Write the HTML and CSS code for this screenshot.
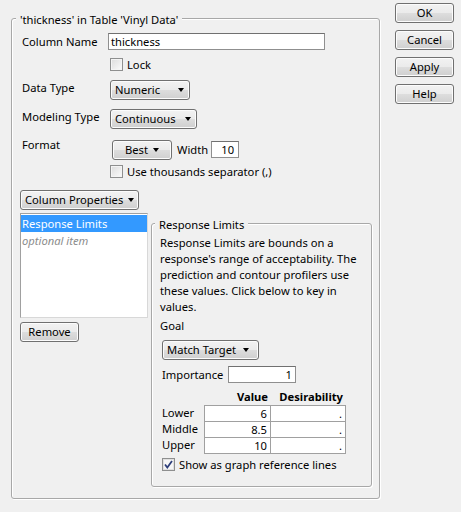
FILE: index.html
```html
<!DOCTYPE html>
<html>
<head>
<meta charset="utf-8">
<link rel="stylesheet" href="styles.css">
</head>
<body>
<div class="page">
  <div class="group main-group">
    <div class="group-title main-title"><span>'thickness' in Table 'Vinyl Data'</span></div>
    <div class="form">
      <div class="row row-name">
        <div class="label">Column Name</div>
        <div class="input name-input">thickness</div>
      </div>
      <div class="row row-lock">
        <div class="label"></div>
        <label class="check"><span class="box"></span><span>Lock</span></label>
      </div>
      <div class="row row-drop">
        <div class="label">Data Type</div>
        <div class="btn drop drop-numeric"><span>Numeric</span><i class="tri"></i></div>
      </div>
      <div class="row row-drop">
        <div class="label">Modeling Type</div>
        <div class="btn drop drop-cont"><span>Continuous</span><i class="tri"></i></div>
      </div>
      <div class="row row-format">
        <div class="label label-format">Format</div>
        <div class="format-ctrls">
          <div class="btn drop drop-best"><span>Best</span><i class="tri"></i></div>
          <span class="width-label">Width</span>
          <div class="input width-input">10</div>
        </div>
      </div>
      <div class="row row-sep">
        <div class="label"></div>
        <label class="check"><span class="box"></span><span>Use thousands separator (,)</span></label>
      </div>
    </div>
    <div class="btn drop drop-props"><span>Column Properties</span><i class="tri"></i></div>
    <div class="lower">
      <div class="left-col">
        <div class="listbox">
          <div class="item selected">Response Limits</div>
          <div class="item optional">optional item</div>
        </div>
        <div class="btn remove">Remove</div>
      </div>
      <div class="group inner-group">
        <div class="group-title inner-title"><span>Response Limits</span></div>
        <p class="desc">Response Limits are bounds on a response's range of acceptability. The prediction and contour profilers use these values. Click below to key in values.</p>
        <div class="goal">Goal</div>
        <div class="btn drop drop-match"><span>Match Target</span><i class="tri"></i></div>
        <div class="importance">
          <span class="imp-label">Importance</span>
          <div class="input imp-input">1</div>
        </div>
        <div class="limits">
          <div class="hcell"></div>
          <div class="hcell hval">Value</div>
          <div class="hcell hdes">Desirability</div>
          <div class="rowhead">Lower</div>
          <div class="cell">6</div>
          <div class="cell des">.</div>
          <div class="rowhead">Middle</div>
          <div class="cell">8.5</div>
          <div class="cell des">.</div>
          <div class="rowhead">Upper</div>
          <div class="cell">10</div>
          <div class="cell des">.</div>
        </div>
        <label class="check check-graph"><span class="box checked"><svg width="9" height="9" viewBox="0 0 9 9"><path d="M1 4.5 L3.3 7.5 L8 1" fill="none" stroke="#2e3f7a" stroke-width="1.8"/></svg></span><span>Show as graph reference lines</span></label>
      </div>
    </div>
  </div>
  <div class="side">
    <div class="btn side-btn">OK</div>
    <div class="btn side-btn">Cancel</div>
    <div class="btn side-btn">Apply</div>
    <div class="btn side-btn">Help</div>
  </div>
</div>
</body>
</html>
```

FILE: styles.css
```css
html, body {
  margin: 0;
  padding: 0;
  background: #f0f0f0;
}
body {
  font-family: "Noto Sans", "DejaVu Sans", sans-serif;
  font-size: 11.2px;
  color: #000;
  width: 461px;
  height: 512px;
  overflow: hidden;
}
.page {
  display: flex;
  align-items: flex-start;
}
.group {
  box-sizing: border-box;
  border: 1px solid #a8a8a8;
  border-radius: 3px;
  box-shadow: 1px 1px 0 #fff, inset 1px 1px 0 #fff;
}
.main-group {
  margin: 18px 0 0 11px;
  width: 369px;
  height: 481px;
  padding: 0 0 0 10px;
}
.group-title {
  height: 15px;
  line-height: 15px;
  margin-top: -7px;
}
.group-title span {
  display: inline-block;
  background: #f0f0f0;
  padding: 0 4px;
}
.main-title span { margin-left: -6px; }
.inner-title span { margin-left: -5px; }

.form {
  margin-top: 6px;
  display: flex;
  flex-direction: column;
}
.row {
  display: grid;
  grid-template-columns: 86px auto;
  align-items: start;
}
.label {
  line-height: 15px;
}
.row-name .label { line-height: 17px; }
.row-lock { margin-top: 8px; }
.row-drop { margin-top: 9px; }
.row-format { margin-top: 11px; }
.row-sep { margin-top: 5px; }
.label-format { margin-top: -3px; }

.input {
  box-sizing: border-box;
  background: #fff;
  border: 1px solid #8f8f8f;
  border-top-color: #707070;
  height: 17px;
  line-height: 15px;
  padding: 0 2px;
}
.name-input { width: 217px; }

.check {
  display: flex;
  align-items: center;
  gap: 4px;
  height: 13px;
  line-height: 13px;
  margin-left: 2px;
}
.box {
  box-sizing: border-box;
  width: 13px;
  height: 13px;
  border: 1px solid #8e8f8f;
  background: linear-gradient(135deg, #dcdcdc, #fbfbfb);
  box-shadow: inset 0 0 0 1px #f4f4f4;
  display: flex;
  align-items: center;
  justify-content: center;
}
.box.checked { background: #f6f6f6; box-shadow: inset 0 0 0 1px #e0e0e0; }

.btn {
  box-sizing: border-box;
  height: 20px;
  line-height: 18px;
  border: 1px solid #707070;
  border-radius: 3px;
  background: linear-gradient(#f2f2f2 0%, #ebebeb 48%, #dddddd 52%, #cfcfcf 100%);
  box-shadow: inset 0 0 0 1px #fcfcfc;
  text-align: center;
}
.drop {
  display: flex;
  align-items: center;
  justify-content: space-between;
  padding: 0 5px 0 4px;
  margin-left: 2px;
}
.tri {
  width: 0;
  height: 0;
  border-left: 3.5px solid transparent;
  border-right: 3.5px solid transparent;
  border-top: 4px solid #000;
}
.drop-numeric { width: 80px; }
.drop-cont { width: 87px; }

.format-ctrls {
  display: flex;
  align-items: flex-start;
}
.drop-best {
  width: 60px;
  margin-left: 4px;
  padding: 0 12px 0 12px;
}
.width-label {
  margin-left: 5px;
  line-height: 19px;
}
.width-input {
  margin-left: 3px;
  margin-top: 1px;
  width: 28px;
  text-align: right;
  padding-right: 4px;
}

.drop-props {
  margin: 12px 0 0 -2px;
  width: 119px;
  padding: 0 4px 0 4px;
}

.lower {
  display: flex;
  align-items: flex-start;
  gap: 3px;
  margin: 3px 0 0 -2px;
}
.left-col {
  display: flex;
  flex-direction: column;
  align-items: flex-start;
}
.listbox {
  box-sizing: border-box;
  width: 128px;
  height: 105px;
  background: #fff;
  border: 1px solid #a0a0a0;
  border-right-color: #d8d8d8;
  border-bottom-color: #d8d8d8;
  padding: 1px 0 0 0;
}
.item {
  height: 17px;
  line-height: 17px;
  padding-left: 1px;
}
.item.selected {
  background: #3399ff;
  color: #fff;
}
.item.optional {
  color: #8c8c8c;
  font-style: italic;
}
.remove {
  margin-top: 4px;
  width: 59px;
}

.inner-group {
  margin-top: 10px;
  width: 221px;
  height: 264px;
  padding: 0 0 0 8px;
}
.desc {
  margin: 3px 0 0 0;
  line-height: 16px;
  width: 205px;
}
.goal {
  margin-top: 3px;
  line-height: 16px;
}
.drop-match {
  margin-top: 6px;
  width: 97px;
  padding: 0 9px 0 4px;
}
.importance {
  margin: 6px 0 0 2px;
  display: flex;
  align-items: center;
}
.imp-label { width: 66px; }
.imp-input {
  width: 68px;
  text-align: right;
  padding-right: 3px;
}
.limits {
  margin: 6px 0 0 1px;
  display: grid;
  grid-template-columns: 43px 67px 75px;
}
.hcell {
  height: 16px;
  line-height: 16px;
  font-weight: bold;
  text-align: right;
  padding-right: 3px;
}
.rowhead {
  box-sizing: border-box;
  height: 17px;
  line-height: 16px;
  margin-top: -1px;
  padding-left: 1px;
}
.limits .rowhead:nth-child(4) { margin-top: 0; }
.cell {
  box-sizing: border-box;
  height: 17px;
  line-height: 15px;
  background: #fff;
  border: 1px solid #a0a0a0;
  text-align: right;
  padding-right: 3px;
  margin-top: -1px;
}
.limits .cell:nth-child(5), .limits .cell:nth-child(6) { margin-top: 0; }
.cell.des { margin-left: -1px; }
.check-graph {
  margin: 4px 0 0 2px;
}

.side {
  margin: 3px 0 0 15px;
  display: flex;
  flex-direction: column;
  gap: 7px;
}
.side-btn {
  width: 59px;
}
```
